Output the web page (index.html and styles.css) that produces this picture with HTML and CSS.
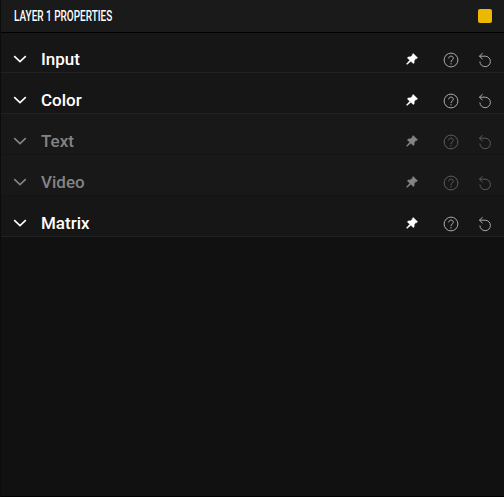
FILE: index.html
```
<!DOCTYPE html>
<html lang="en">
<head>
<meta charset="utf-8">
<title>Layer 1 Properties</title>
<link rel="stylesheet" href="styles.css">
</head>
<body>
<svg class="defs" aria-hidden="true">
  <symbol id="chevron" viewBox="0 0 14 8"><path d="M1.2 1.2 7 6.6l5.8-5.4" fill="none" stroke="currentColor" stroke-width="1.6"/></symbol>
  <symbol id="pin" viewBox="0 0 12 12"><path d="M7.2.4 11.6 4.8 10.7 5.7 9.9 5.5 8.3 7.5 8.1 10.1 7.2 10.6 4.9 8.3 1.1 11.5.4 10.9 3.7 7.2 1.4 4.9 2 4 4.5 3.8 6.6 2.1 6.3 1.3Z" fill="currentColor" stroke="currentColor" stroke-width=".4"/></symbol>
  <symbol id="help" viewBox="0 0 16 16"><g fill="none" stroke="currentColor"><circle cx="8" cy="8" r="6.9"/><path d="M5.7 6.4c0-1.5 1-2.3 2.3-2.3s2.3.8 2.3 2.1c0 1.7-2.3 1.7-2.3 4M8 11.2v1.3"/></g></symbol>
  <symbol id="reset" viewBox="0 0 14 16"><path d="M4.6 1.2 1.4 4.2 4.6 7.2M1.4 4.2H7.2A5.25 5.25 0 1 1 1.9 9.5" fill="none" stroke="currentColor"/></symbol>
</svg>
<main class="panel">
  <header class="header"><h1 class="title">LAYER 1 PROPERTIES</h1><span class="swatch"></span></header>
  <section class="row"><svg class="chevron"><use href="#chevron"/></svg><h2 class="label">Input</h2><svg class="pin"><use href="#pin"/></svg><svg class="help"><use href="#help"/></svg><svg class="reset"><use href="#reset"/></svg></section>
  <section class="row"><svg class="chevron"><use href="#chevron"/></svg><h2 class="label">Color</h2><svg class="pin"><use href="#pin"/></svg><svg class="help"><use href="#help"/></svg><svg class="reset"><use href="#reset"/></svg></section>
  <section class="row disabled"><svg class="chevron"><use href="#chevron"/></svg><h2 class="label">Text</h2><svg class="pin"><use href="#pin"/></svg><svg class="help"><use href="#help"/></svg><svg class="reset"><use href="#reset"/></svg></section>
  <section class="row disabled"><svg class="chevron"><use href="#chevron"/></svg><h2 class="label">Video</h2><svg class="pin"><use href="#pin"/></svg><svg class="help"><use href="#help"/></svg><svg class="reset"><use href="#reset"/></svg></section>
  <section class="row"><svg class="chevron"><use href="#chevron"/></svg><h2 class="label">Matrix</h2><svg class="pin"><use href="#pin"/></svg><svg class="help"><use href="#help"/></svg><svg class="reset"><use href="#reset"/></svg></section>
</main>
</body>
</html>
```
FILE: styles.css
```
* { box-sizing: border-box; }
body {
  margin: 0;
  background: #111;
  color: #fff;
  font-family: Roboto, "Liberation Sans", sans-serif;
}
.defs { display: none; }
.panel {
  height: 497px;
  border-left: 1px solid #0c0c0c;
  border-bottom: 1px solid #000;
}
.header {
  display: flex;
  align-items: center;
  justify-content: space-between;
  height: 33px;
  padding: 0 12px 0 13px;
  background: #1a1a1a;
  border-bottom: 1px solid #000;
}
.title {
  margin: 0;
  font-size: 14px;
  font-weight: 500;
  line-height: 32px;
  white-space: nowrap;
  transform: scaleX(.713);
  transform-origin: left;
}
.swatch {
  width: 14px;
  height: 14px;
  margin-bottom: 1px;
  border-radius: 2px;
  background: #ecb900;
}
.row {
  display: flex;
  align-items: center;
  height: 41px;
  padding: 14px 12px 0 12px;
  background: #161616;
  border-bottom: 1px solid #222;
}
.header + .row { height: 40px; padding-top: 13px; }
.row.disabled { background: #181818; border-bottom-color: #141414; color: #848484; }
.chevron { width: 14px; height: 8px; margin-right: 14px; }
.label {
  flex: 1;
  margin: 0;
  font-size: 17px;
  font-weight: 500;
  line-height: 22px;
}
.pin { width: 12px; height: 12px; margin-right: 24.5px; }
.help { width: 16px; height: 16px; margin-right: 19.5px; margin-top: 1px; color: #aaa; }
.reset { width: 14px; height: 16px; margin-top: 1px; color: #aaa; }
.disabled .help, .disabled .reset { color: #5c5c5c; }
```
